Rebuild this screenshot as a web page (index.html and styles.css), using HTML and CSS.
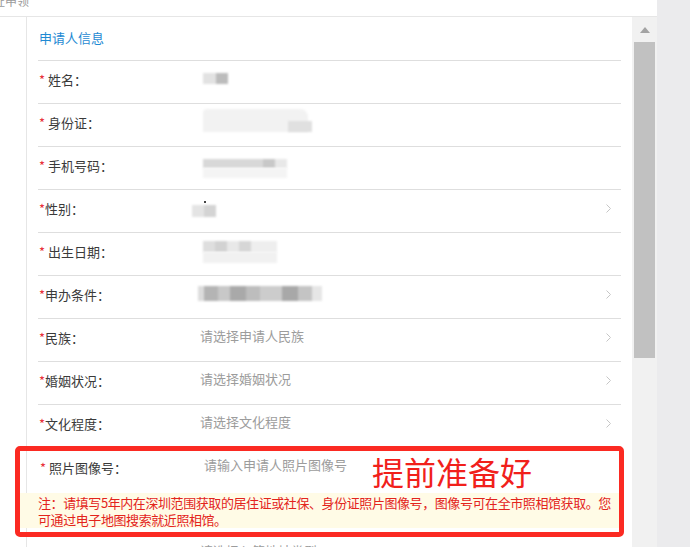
FILE: index.html
```html
<!DOCTYPE html>
<html lang="zh-CN">
<head>
<meta charset="utf-8">
<title>申请人信息</title>
<link rel="stylesheet" href="styles.css">
</head>
<body>
<div class="screen">
  <div class="main">
    <div class="topbar"><span class="crumb">证申领</span></div>
    <div class="body">
      <div class="gutter"></div>
      <div class="panel">
        <div class="section">申请人信息</div>

        <div class="row">
          <div class="label"><span class="req">*</span> 姓名：</div>
          <div class="value"><span class="blur b-name"></span></div>
        </div>
        <div class="row">
          <div class="label"><span class="req">*</span> 身份证：</div>
          <div class="value"><span class="blur b-id1"></span><span class="blur b-id2"></span></div>
        </div>
        <div class="row">
          <div class="label"><span class="req">*</span> 手机号码：</div>
          <div class="value"><span class="blur b-tel1"></span><span class="blur b-tel2"></span></div>
        </div>
        <div class="row">
          <div class="label"><span class="req">*</span>性别：</div>
          <div class="value"><span class="dot"></span><span class="blur b-sex"></span></div>
          <svg class="chev" width="5" height="9" viewBox="0 0 5 9"><polyline points="0.5,0.5 4.5,4.5 0.5,8.5" fill="none" stroke="#c6c6c6" stroke-width="1"/></svg>
        </div>
        <div class="row">
          <div class="label"><span class="req">*</span> 出生日期：</div>
          <div class="value"><span class="blur b-date1"></span><span class="blur b-date2"></span></div>
        </div>
        <div class="row">
          <div class="label"><span class="req">*</span>申办条件：</div>
          <div class="value"><span class="blur b-cond"></span></div>
          <svg class="chev" width="5" height="9" viewBox="0 0 5 9"><polyline points="0.5,0.5 4.5,4.5 0.5,8.5" fill="none" stroke="#c6c6c6" stroke-width="1"/></svg>
        </div>
        <div class="row">
          <div class="label"><span class="req">*</span>民族：</div>
          <div class="value">请选择申请人民族</div>
          <svg class="chev" width="5" height="9" viewBox="0 0 5 9"><polyline points="0.5,0.5 4.5,4.5 0.5,8.5" fill="none" stroke="#c6c6c6" stroke-width="1"/></svg>
        </div>
        <div class="row">
          <div class="label"><span class="req">*</span>婚姻状况：</div>
          <div class="value">请选择婚姻状况</div>
          <svg class="chev" width="5" height="9" viewBox="0 0 5 9"><polyline points="0.5,0.5 4.5,4.5 0.5,8.5" fill="none" stroke="#c6c6c6" stroke-width="1"/></svg>
        </div>
        <div class="row">
          <div class="label"><span class="req">*</span>文化程度：</div>
          <div class="value">请选择文化程度</div>
          <svg class="chev" width="5" height="9" viewBox="0 0 5 9"><polyline points="0.5,0.5 4.5,4.5 0.5,8.5" fill="none" stroke="#c6c6c6" stroke-width="1"/></svg>
        </div>

        <div class="highlight">
          <div class="row boxed">
            <div class="label wide"><span class="req">*</span> 照片图像号：</div>
            <div class="value">请输入申请人照片图像号</div>
          </div>
          <div class="note">注：请填写5年内在深圳范围获取的居住证或社保、身份证照片图像号，图像号可在全市照相馆获取。您<br>可通过电子地图搜索就近照相馆。</div>
          <div class="callout">提前准备好</div>
        </div>

        <div class="row tail">
          <div class="label"></div>
          <div class="value">请选择入籍地址类型</div>
        </div>
      </div>
      <div class="scrollbar">
        <div class="sb-up"><span class="sb-arrow"></span></div>
        <div class="sb-thumb"></div>
      </div>
    </div>
  </div>
  <div class="side"></div>
</div>
</body>
</html>
```

FILE: styles.css
```css
html, body {
  margin: 0;
  padding: 0;
}
body {
  width: 690px;
  height: 547px;
  overflow: hidden;
  background: #ebebed;
  font-family: "Noto Sans CJK SC", "Microsoft YaHei", "Noto Sans", sans-serif;
}
.screen {
  display: flex;
  height: 547px;
}
.main {
  width: 657px;
  flex: none;
  background: #fff;
  display: flex;
  flex-direction: column;
}
.side {
  flex: 1;
  background: #ebebed;
}
.topbar {
  height: 16px;
  border-bottom: 1px solid #e6e6e6;
  overflow: hidden;
  flex: none;
}
.crumb {
  display: block;
  font-size: 12px;
  line-height: 12px;
  color: #9a9a9a;
  margin-top: -5px;
  margin-left: -7px;
}
.body {
  flex: 1;
  display: flex;
  min-height: 0;
}
.gutter {
  width: 26px;
  flex: none;
  border-right: 1px solid #e6e6e6;
}
.panel {
  flex: 1;
  min-width: 0;
  padding: 0 11px;
}
.section {
  border-bottom: 1px solid #dedede;
  display: flex;
  align-items: center;
  padding-left: 1px;
  padding-bottom: 2px;
  box-sizing: border-box;
  height: 44px;
  font-size: 13px;
  color: #1f8ad3;
}
.row {
  height: 43px;
  box-sizing: border-box;
  border-bottom: 1px solid #dedede;
  display: flex;
  align-items: center;
  padding-bottom: 5px;
  font-size: 13px;
  color: #3a3a3a;
}
.label {
  width: 162px;
  flex: none;
  padding-left: 1px;
  box-sizing: border-box;
}
.label.wide {
  width: 165px;
}
.req {
  color: #e8303a;
}
.value {
  flex: 1;
  align-self: stretch;
  position: relative;
  display: flex;
  align-items: center;
  padding-bottom: 4px;
  color: #9c9c9c;
}
.chev {
  flex: none;
  margin-right: 10px;
}

/* redacted values */
.blur {
  position: absolute;
  filter: blur(1.2px);
}
.b-name {
  left: 3px; top: 12px; width: 25px; height: 11px;
  background: linear-gradient(90deg, #e2e2e2 0 13px, #bcbcbc 13px);
}
.b-id1 {
  left: 3px; top: 5px; width: 105px; height: 23px;
  background: #f2f2f2;
  border-radius: 4px 8px 0 0;
}
.b-id2 {
  left: 88px; top: 17px; width: 24px; height: 11px;
  background: #e0e0e0;
}
.b-tel1 {
  left: 3px; top: 12px; width: 84px; height: 9px;
  background: linear-gradient(90deg, #d8d8d8 0 60px, #c8c8c8 60px 72px, #e8e8e8 72px);
}
.b-tel2 {
  left: 3px; top: 21px; width: 84px; height: 10px;
  background: #f4f4f4;
}
.dot {
  position: absolute;
  left: 4px; top: 11px; width: 2px; height: 2px;
  background: #444;
}
.b-sex {
  left: -8px; top: 15px; width: 24px; height: 12px;
  background: linear-gradient(90deg, #e4e4e4 0 12px, #d4d4d4 12px);
}
.b-date1 {
  left: 3px; top: 8px; width: 74px; height: 11px;
  background: linear-gradient(90deg, #dedede 0 12px, #d2d2d2 12px 24px, #e8e8e8 24px 36px, #d6d6d6 36px 48px, #eeeeee 48px);
}
.b-date2 {
  left: 3px; top: 19px; width: 74px; height: 11px;
  background: #f1f1f1;
}
.b-cond {
  left: -2px; top: 10px; width: 124px; height: 15px;
  background: linear-gradient(90deg, #dcdcdc 0 6px, #b4b4b4 6px 20px, #c8c8c8 20px 32px, #a9a9a9 32px 48px, #bdbdbd 48px 62px, #cccccc 62px 84px, #a8a8a8 84px 100px, #c4c4c4 100px 114px, #e6e6e6 114px);
}

/* highlighted annotation box */
.highlight {
  position: relative;
  margin: -2px -3px 0 -23px;
  border: 5px solid #fb2a22;
  border-radius: 5px;
  padding-bottom: 4px;
}
.row.boxed {
  height: 36px;
  border-bottom: none;
  padding: 0 0 4px 19px;
  margin-bottom: 6px;
}
.row.boxed .value {
  padding-bottom: 5px;
}
.note {
  background: #fffbe6;
  padding: 1px 10px 0 18px;
  font-size: 13px;
  line-height: 17px;
  letter-spacing: -0.42px;
  color: #e3241c;
  white-space: nowrap;
}
.callout {
  position: absolute;
  left: 352px;
  top: 4px;
  font-size: 32px;
  line-height: 32px;
  color: #f1201b;
}
.row.tail {
  height: 30px;
  border-bottom: none;
  padding-bottom: 0;
}

/* scrollbar */
.scrollbar {
  width: 25px;
  flex: none;
  background: #f1f1f1;
  display: flex;
  flex-direction: column;
  align-items: center;
}
.sb-up {
  height: 25px;
  width: 100%;
  display: flex;
  align-items: center;
  justify-content: center;
}
.sb-arrow {
  width: 0;
  height: 0;
  border-left: 5px solid transparent;
  border-right: 5px solid transparent;
  border-bottom: 6px solid #a3a3a3;
}
.sb-thumb {
  width: 21px;
  height: 316px;
  background: #c1c1c1;
}
```
